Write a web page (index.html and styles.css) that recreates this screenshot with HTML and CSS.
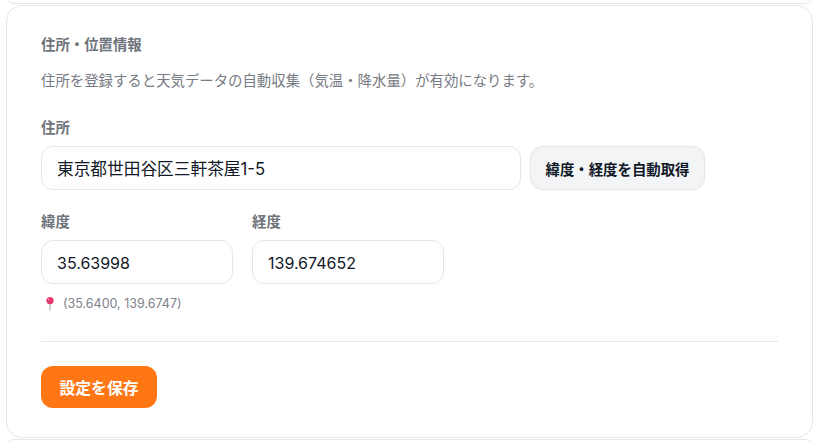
FILE: index.html
```html
<!DOCTYPE html>
<html lang="ja">
<head>
<meta charset="utf-8">
<title>住所・位置情報</title>
<link rel="stylesheet" href="styles.css">
</head>
<body>
<div class="stub stub-top"></div>
<section class="card">
  <h2 class="title">住所・位置情報</h2>
  <p class="desc">住所を登録すると天気データの自動収集（気温・降水量）が有効になります。</p>
  <label class="label">住所</label>
  <div class="row">
    <input class="input input-address" type="text" value="東京都世田谷区三軒茶屋1-5">
    <button class="btn-secondary" type="button">緯度・経度を自動取得</button>
  </div>
  <div class="coords">
    <div class="field">
      <label class="label">緯度</label>
      <input class="input input-coord" type="text" value="35.63998">
    </div>
    <div class="field">
      <label class="label">経度</label>
      <input class="input input-coord" type="text" value="139.674652">
    </div>
  </div>
  <p class="note">
    <svg class="pin" viewBox="0 0 12 16" width="12" height="16" aria-hidden="true">
      <rect x="5.4" y="7" width="1.2" height="7.5" rx=".6" fill="#a5adb6"/>
      <circle cx="6" cy="4.6" r="3.6" fill="#e8336b"/>
      <circle cx="4.8" cy="3.4" r="1" fill="#f78fb0"/>
    </svg>
    <span>(35.6400, 139.6747)</span>
  </p>
  <hr class="divider">
  <button class="btn-primary" type="button">設定を保存</button>
</section>
<div class="stub stub-bottom"></div>
</body>
</html>
```

FILE: styles.css
```css
* { box-sizing: border-box; }
html, body { height: 100%; }
body {
  margin: 0;
  padding: 0 6px;
  height: 442px;
  overflow: hidden;
  background: #fff;
  font-family: Inter, "Noto Sans CJK JP", sans-serif;
  color: #111827;
}
.stub {
  border: 1px solid #e5e7eb;
  height: 16px;
  border-radius: 16px;
}
.stub-top { margin-top: -12px; }
.stub-bottom { margin-top: 1px; }
.card {
  margin-top: 1px;
  height: 433px;
  padding: 29px 34px 0;
  border: 1px solid #e5e7eb;
  border-radius: 16px;
  background: #fff;
}
.title {
  margin: 0;
  font-size: 14.4px;
  line-height: 20px;
  font-weight: 700;
  color: #6f737b;
}
.desc {
  margin: 15px 0 0;
  font-size: 14.4px;
  line-height: 22px;
  color: #777b83;
}
.label {
  display: block;
  font-size: 14.4px;
  line-height: 20px;
  font-weight: 700;
  color: #6f737b;
  margin-bottom: 8px;
}
.desc + .label { margin-top: 26px; }
.row { display: flex; gap: 9px; }
.input {
  display: block;
  height: 44px;
  padding: 0 15px;
  border: 1px solid #e5e7eb;
  border-radius: 12px;
  background: #fff;
  font: inherit;
  font-size: 16px;
  color: #111827;
  outline: none;
}
.input-address { width: 480px; font-size: 16.7px; }
.input-coord { width: 192px; padding-top: 2px; }
.btn-secondary {
  width: 175px;
  height: 44px;
  padding: 0;
  border: 1px solid #e5e7eb;
  border-radius: 12px;
  background: #f3f4f6;
  font: inherit;
  font-size: 14.4px;
  font-weight: 700;
  color: #111827;
}
.coords { display: flex; gap: 19px; margin-top: 22px; }
.note {
  display: flex;
  align-items: center;
  gap: 7px;
  margin: 11px 0 0;
  padding-left: 3px;
  font-size: 12.5px;
  line-height: 18px;
  color: #7d828a;
}
.pin { flex: none; }
.divider {
  margin: 28px 0 24px;
  border: 0;
  border-top: 1px solid #e5e7eb;
}
.btn-primary {
  display: block;
  width: 116px;
  height: 42px;
  padding: 0;
  border: 0;
  border-radius: 12px;
  background: #ff7715;
  font: inherit;
  font-size: 15.8px;
  font-weight: 700;
  color: #fff;
}
```
